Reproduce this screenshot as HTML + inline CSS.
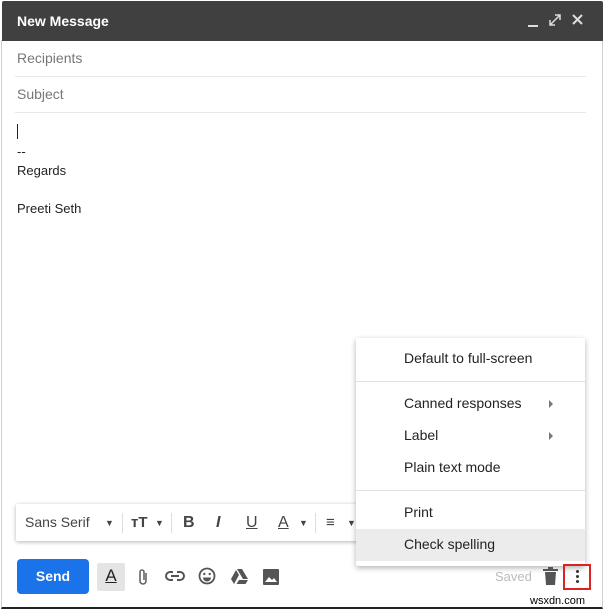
<!DOCTYPE html>
<html><head><style>
*{margin:0;padding:0;box-sizing:border-box}
body{width:605px;height:613px;background:#fff;position:relative;overflow:hidden;font-family:"Liberation Sans",Arial,sans-serif;color:#222}
.a{position:absolute}
.hdr{left:2px;top:1px;width:601px;height:40px;background:#404040;color:#fff;font-weight:bold;font-size:14px;padding:12px 0 0 15px;border-radius:2px 2px 0 0}
.win{left:1px;top:40px;width:602px;height:569px;border:1px solid #cfcfcf;border-top:none;border-bottom:2px solid #222}
.ph{color:#777;font-size:14px;left:17px}
.ln{left:15px;width:571px;height:1px;background:#e8e8e8}
.t{font-size:13px;left:17px;color:#222}
.menu{left:356px;top:338px;width:229px;height:228px;background:#fff;box-shadow:0 2px 6px rgba(0,0,0,.3);border-radius:2px}
.mi{position:absolute;left:48px;font-size:14px;color:#222}
.sep{position:absolute;left:0;width:229px;height:1px;background:#e0e0e0}
.arr{position:absolute;left:193px;width:0;height:0;border-top:4px solid transparent;border-bottom:4px solid transparent;border-left:4px solid #777}
.tb{left:16px;top:504px;width:345px;height:37px;background:#fff;box-shadow:0 1px 4px rgba(0,0,0,.3);border-radius:2px}
.tbt{position:absolute;font-size:14px;color:#444;top:10px}
.vs{position:absolute;top:9px;width:1px;height:20px;background:#ddd}
svg{position:absolute}
</style></head><body>
<div class="a win"></div>
<div class="a hdr">New Message</div>
<div class="a" style="left:528px;top:25px;width:10px;height:2px;background:#ddd"></div>
<svg style="left:549px;top:14px" width="12" height="12" viewBox="0 0 12 12"><path d="M1 11L11 1M6 1h5v5M1 6v5h5" stroke="#ddd" stroke-width="1.5" fill="none"/></svg>
<svg style="left:572px;top:14px" width="11" height="11" viewBox="0 0 11 11"><path d="M1 1L10 10M10 1L1 10" stroke="#ddd" stroke-width="2"/></svg>
<div class="a ph" style="top:50px">Recipients</div>
<div class="a ln" style="top:76px"></div>
<div class="a ph" style="top:86px">Subject</div>
<div class="a ln" style="top:112px"></div>
<div class="a" style="left:17px;top:124px;width:1px;height:15px;background:#222"></div>
<div class="a t" style="top:144px">--</div>
<div class="a t" style="top:163px">Regards</div>
<div class="a t" style="top:201px">Preeti Seth</div>
<div class="a tb">
<div class="tbt" style="left:9px">Sans Serif</div>
<div class="tbt" style="left:89px;font-size:9px;top:14px">▼</div>
<div class="vs" style="left:106px"></div>
<div class="tbt" style="left:115px;font-weight:bold;font-size:15px">тT</div><div class="tbt" style="left:139px;font-size:9px;top:14px">▼</div>
<div class="vs" style="left:155px"></div>
<div class="tbt" style="left:167px;font-weight:bold;font-size:16px">B</div>
<div class="tbt" style="left:200px;font-style:italic;font-weight:bold;font-size:16px">I</div>
<div class="tbt" style="left:230px;font-size:16px;text-decoration:underline">U</div>
<div class="tbt" style="left:262px;font-size:16px;text-decoration:underline">A</div><div class="tbt" style="left:283px;font-size:9px;top:14px">▼</div>
<div class="vs" style="left:299px"></div>
<div class="tbt" style="left:310px;font-size:15px">≡</div><div class="tbt" style="left:331px;font-size:9px;top:14px">▼</div>
</div>
<div class="a menu">
<div class="mi" style="top:12px">Default to full-screen</div>
<div class="sep" style="top:43px"></div>
<div class="mi" style="top:57px">Canned responses</div><div class="arr" style="top:62px"></div>
<div class="mi" style="top:89px">Label</div><div class="arr" style="top:94px"></div>
<div class="mi" style="top:121px">Plain text mode</div>
<div class="sep" style="top:152px"></div>
<div class="mi" style="top:166px">Print</div>
<div style="position:absolute;left:0;top:191px;width:229px;height:32px;background:#ececec"></div>
<div class="mi" style="top:198px">Check spelling</div>
</div>
<div class="a" style="left:17px;top:559px;width:72px;height:35px;background:#1a73e8;border-radius:4px;color:#fff;font-weight:bold;font-size:14px;text-align:center;line-height:35px">Send</div>
<div class="a" style="left:97px;top:563px;width:28px;height:28px;background:#e4e4e4;border-radius:2px;text-align:center;font-size:17px;line-height:26px;color:#222;text-decoration:underline">A</div>
<svg style="left:137px;top:568px" width="12" height="18" viewBox="0 0 12 18"><path d="M9 5v8a3 3 0 0 1-6 0V4a2 2 0 0 1 4 0v8" stroke="#666" stroke-width="1.6" fill="none"/></svg>
<svg style="left:165px;top:570px" width="20" height="12" viewBox="0 0 20 12"><path d="M8 2H5a4 4 0 0 0 0 8h3M12 2h3a4 4 0 0 1 0 8h-3M6 6h8" stroke="#555" stroke-width="2" fill="none"/></svg>
<svg style="left:198px;top:567px" width="18" height="18" viewBox="0 0 18 18"><circle cx="9" cy="9" r="7.5" stroke="#555" stroke-width="1.8" fill="none"/><circle cx="6.3" cy="7" r="1.2" fill="#555"/><circle cx="11.7" cy="7" r="1.2" fill="#555"/><path d="M5 10.5h8a4 4 0 0 1-8 0z" fill="#555"/></svg>
<svg style="left:231px;top:569px" width="17" height="15" viewBox="0 0 17 15"><path d="M6 0h5l6 10h-5zM5 1l3 5-5 9-3-5zM8 11h9l-2.5 4h-9z" fill="#555"/></svg>
<svg style="left:263px;top:569px" width="16" height="16" viewBox="0 0 16 16"><rect width="16" height="16" rx="1" fill="#555"/><path d="M2 13l4-5 3 3 2-2 3 4z" fill="#fff"/></svg>
<div class="a" style="left:495px;top:569px;font-size:13px;color:#bbb">Saved</div>
<svg style="left:543px;top:567px" width="15" height="18" viewBox="0 0 15 18"><rect x="0" y="2" width="15" height="2" fill="#555"/><rect x="5" y="0" width="5" height="2" fill="#555"/><path d="M2 5h11l-1 13H3z" fill="#555"/></svg>
<div class="a" style="left:563px;top:564px;width:28px;height:26px;border:2px solid #d22"></div>
<div class="a" style="left:576px;top:570px;width:3px;height:3px;background:#333;border-radius:50%;box-shadow:0 5px 0 #333,0 10px 0 #333"></div>
<div class="a" style="left:530px;top:595px;font-size:11px;color:#000">wsxdn.com</div>
</body></html>
